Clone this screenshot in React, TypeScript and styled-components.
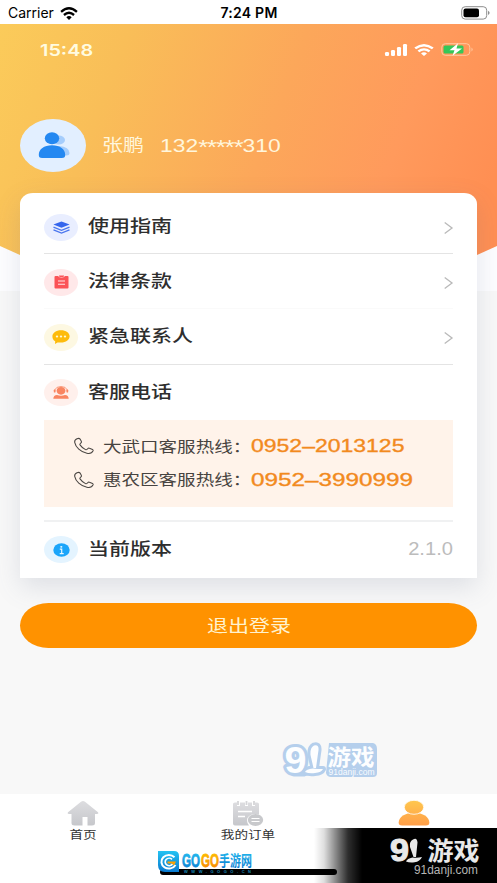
import React from 'react';
import styled, { createGlobalStyle } from 'styled-components';

const GlobalStyle = createGlobalStyle`
  * { box-sizing: border-box; }
  html, body { margin: 0; padding: 0; }
  body {
    font-family: 'Liberation Sans', 'Noto Sans CJK SC', sans-serif;
    background: #f7f7f7;
    overflow: hidden;
  }
  svg { display: block; flex: none; overflow: visible; }
`;

const Screen = styled.div`
  position: relative;
  width: 497px;
  height: 883px;
  display: flex;
  flex-direction: column;
  overflow: hidden;
  background: #f8f8f8;
`;

const StatusBar = styled.header`
  height: 24px;
  flex: none;
  display: grid;
  grid-template-columns: 1fr auto 1fr;
  align-items: center;
  padding: 2px 7px 0 8px;
  background: #fff;
  color: #000;
  font: 400 14px/20px Inter, sans-serif;
`;

const Carrier = styled.div`
  display: flex;
  align-items: center;
  gap: 6px;
`;

const Clock = styled.div`
  font-weight: 600;
  font-size: 14px;
  letter-spacing: 0.25px;
`;

const BatterySlot = styled.div`
  justify-self: end;
`;

const Hero = styled.section`
  height: 266px;
  flex: none;
  display: flex;
  flex-direction: column;
  background: linear-gradient(111deg, #fbcb5a 0%, #f9be58 22%, #fca75a 52%, #ff9a5c 74%, #ff8f53 92%);
  clip-path: polygon(0 0, 100% 0, 100% 222px, 477px 231px, 430px 250px, 67px 250px, 20px 231px, 0 222px);
`;

const InnerStatus = styled.div`
  height: 51px;
  display: flex;
  align-items: center;
  justify-content: space-between;
  padding: 0 23px 0 40px;
`;

const InnerIcons = styled.div`
  display: flex;
  align-items: center;
  gap: 7px;
`;

const Stretch = styled.span<{ $x?: number; $origin?: string }>`
  display: inline-block;
  white-space: nowrap;
  transform: scaleX(${p => p.$x ?? 1.235});
  transform-origin: ${p => p.$origin ?? 'left'} center;
`;

const InnerTime = styled(Stretch)`
  color: #fffbe0;
  font: 600 16px/20px Inter, sans-serif;
`;

const Profile = styled.div`
  display: flex;
  align-items: center;
  height: 53px;
  margin-top: 44px;
  padding-left: 20px;
`;

const Avatar = styled.div`
  width: 66px;
  height: 53px;
  border-radius: 50%;
  background: #e2efff;
  display: grid;
  place-items: center;
`;

const UserName = styled(Stretch)`
  width: 58px;
  margin-left: 16px;
  padding-top: 1px;
  color: #fff6dc;
  font-size: 17px;
  line-height: 24px;
`;

const UserPhone = styled(Stretch)`
  color: #fff6dc;
  font-size: 18px;
  line-height: 24px;
`;

const Mask = styled.span`
  display: inline-block;
  font-size: 20px;
  letter-spacing: -0.8px;
  transform: translateY(2px);
`;

const Content = styled.main`
  flex: 1;
  display: flex;
  flex-direction: column;
  margin-top: -97px;
  padding: 0 20px;
`;

const Card = styled.section`
  height: 385px;
  padding: 6px 24px 0;
  border-radius: 13px 13px 0 0 / 11px 11px 0 0;
  background: #fff;
  position: relative;
  box-shadow: 0 9px 26px rgba(95, 108, 135, 0.17);
`;

const Row = styled.div<{ $line?: string }>`
  height: 55.2px;
  display: flex;
  align-items: center;
  border-bottom: 1px solid ${p => p.$line ?? 'transparent'};
`;

const IconDisc = styled.div<{ $bg: string }>`
  width: 34px;
  height: 27px;
  margin-top: 2px;
  border-radius: 50%;
  background: ${p => p.$bg};
  display: grid;
  place-items: center;
`;

const Title = styled(Stretch)`
  margin-left: 10px;
  padding-top: 2px;
  color: #2e2e2e;
  font-size: 17px;
  font-weight: 500;
  line-height: 24px;
`;

const Trailing = styled.div`
  margin: 3px 0 0 auto;
  display: flex;
`;

const Version = styled(Stretch)`
  margin-top: -2px;
  color: #bcbcbc;
  font-size: 17.5px;
  line-height: 24px;
`;

const Hotlines = styled.div`
  height: 87px;
  padding: 9.5px 0 0 30px;
  background: #fff3ea;
`;

const Hotline = styled.div`
  height: 33.7px;
  display: flex;
  align-items: center;
`;

const HotlineLabel = styled(Stretch)`
  width: 148px;
  margin-left: 9px;
  padding-top: 1px;
  color: #474340;
  font-size: 15px;
  line-height: 24px;
`;

const HotlineNumber = styled(Stretch)`
  color: #f28a1e;
  font-size: 18.4px;
  line-height: 24px;
  -webkit-text-stroke: 0.35px #f28a1e;
`;

const Separator = styled.div`
  height: 2px;
  margin: 13px 0 0;
  background: #f0f1f2;
`;

const Logout = styled.button`
  height: 45.5px;
  flex: none;
  margin-top: 24.5px;
  padding: 3px 0 0;
  border: 0;
  border-radius: 29px / 23px;
  background: #ff9200;
  color: #fff3cf;
  font: 400 17px/24px 'Liberation Sans', 'Noto Sans CJK SC', sans-serif;
  position: relative;
`;

const TabBar = styled.nav`
  height: 89px;
  flex: none;
  display: grid;
  grid-template-columns: repeat(3, 1fr);
  background: #fff;
`;

const Tab = styled.div`
  display: flex;
  flex-direction: column;
  align-items: center;
  padding-top: 6px;
  color: #333;
  font-size: 11px;
  line-height: 14px;
`;

const TabLabel = styled(Stretch)`
  margin-top: 1px;
`;

const LowerBand = styled.div`
  position: absolute;
  left: 0;
  right: 0;
  top: 242px;
  height: 49px;
  background: #fdfdff;
  z-index: 0;
`;

const Layered = styled.div`
  position: relative;
  z-index: 1;
  flex: 1;
  display: flex;
  flex-direction: column;
`;

const Fade = styled.div`
  position: absolute;
  z-index: 2;
  right: 0;
  bottom: 0;
  width: 183px;
  height: 55px;
  background: linear-gradient(to right, rgba(0, 0, 0, 0) 0, rgba(0, 0, 0, 0.13) 10px, rgba(0, 0, 0, 0.5) 23px, rgba(0, 0, 0, 0.82) 34px, #000 48px);
`;

const HomeIndicator = styled.div`
  position: absolute;
  z-index: 3;
  left: 160px;
  top: 869px;
  width: 177px;
  height: 5.5px;
  border-radius: 3px;
  background: #000;
`;

const Mark = styled.div<{ $x: number; $y: number }>`
  position: absolute;
  z-index: 4;
  left: ${p => p.$x}px;
  top: ${p => p.$y}px;
`;

const WifiIcon = ({ color, w, h }: { color: string; w: number; h: number }) => (
  <svg width={w} height={h} viewBox="0 0 20 14" preserveAspectRatio="none" fill="none" stroke={color} strokeWidth="2.6">
    <path d="M1.2 5.2Q10-2.3 18.8 5.2" />
    <path d="M4.4 8.6Q10 3.8 15.6 8.6" />
    <path d="M7 11Q10 8.4 13 11L10 14Z" fill={color} stroke="none" />
  </svg>
);

const Chevron = () => (
  <svg width="9" height="12" viewBox="0 0 9 12" fill="none" stroke="#b9b9b9" strokeWidth="1.3">
    <path d="M.7.6 8 6 .7 11.4" />
  </svg>
);

const Handset = () => (
  <svg width="20" height="16" viewBox="0 0 20 16" fill="none" stroke="#4a4643" strokeWidth="1.05" strokeLinejoin="round">
    <path d="M3 .7C1.5 1.3.4 2.6.7 4.3c.8 4.7 6 9.6 12.2 10.9 2.7.6 5.2-.3 6.2-2.4.3-.7 0-1.1-.6-1.4l-3-1.2c-.7-.3-1.3-.1-1.7.4l-.9.9c-.4.4-.8.4-1.4.1C9.2 10.4 7.2 8.7 6 6.9c-.4-.6-.3-.9.2-1.3l.8-.7c.5-.4.6-.9.4-1.5L6.1 1.1C5.5.2 4.3.2 3 .7Z" />
  </svg>
);

const icons = {
  guide: (
    <svg width="17" height="13" viewBox="0 0 17 13">
      <path d="M8.5.4 16.6 3.5 8.5 6.7.4 3.5Z" fill="#3566ed" />
      <path d="M.5 6.2 8.5 9.3l8-3.1M.5 8.9l8 3.1 8-3.1" fill="none" stroke="#4a76ee" strokeWidth="1.3" />
    </svg>
  ),
  terms: (
    <svg width="15" height="14" viewBox="0 0 15 14">
      <path d="M1.5 1H4q1 1.5 3.5 1.5T11 1h2.500q1 0 1 1v10.500q0 1-1 1h-12q-1 0-1-1V2q0-1 1-1Z" fill="#fb5357" />
      <path d="M5 .4h5v1.100q-2.500 1.200-5 0Z" fill="#fb5357" />
      <path d="M4 6h7M4 9.200h7" stroke="#ffe5e5" strokeWidth="1.1" />
    </svg>
  ),
  contact: (
    <svg width="18" height="14" viewBox="0 0 18 14">
      <path d="M9 .3c4.9 0 8.6 2.6 8.6 6s-3.7 6.300-8.600 6.300H5.500L3 14l.2-2.700C1.400 10.200.4 8.400.4 6.400.4 2.900 4.100.3 9 .3Z" fill="#fdbb0b" />
      <g fill="#fff8d8"><ellipse cx="5" cy="6.5" rx="1.2" ry="1" /><ellipse cx="9" cy="6.5" rx="1.2" ry="1" /><ellipse cx="13" cy="6.5" rx="1.2" ry="1" /></g>
    </svg>
  ),
  service: (
    <svg width="16" height="13" viewBox="0 0 16 13" fill="#f98561">
      <ellipse cx="8" cy="4.8" rx="4.4" ry="3.9" />
      <path d="M1.700 6V4Q3 .5 8 .5T14.300 4v2" fill="none" stroke="#f98561" strokeWidth=".8" />
      <rect x=".8" y="3.6" width="1.7" height="3" rx=".7" />
      <rect x="13.5" y="3.6" width="1.7" height="3" rx=".7" />
      <path d="M.3 12.700Q.5 9.200 4 9q4 1.400 8 0 3.500.2 3.700 3.700Z" />
    </svg>
  ),
  version: (
    <svg width="17" height="14" viewBox="0 0 17 14">
      <ellipse cx="8.5" cy="7" rx="8.2" ry="6.7" fill="#1ba5fa" />
      <ellipse cx="8.3" cy="3.8" rx="1.1" ry=".9" fill="#e8f7ff" />
      <path d="M6.800 6.100h1.900v4.300M6.700 10.600h4" fill="none" stroke="#e8f7ff" strokeWidth="1.2" />
    </svg>
  ),
};

const PaleWordmark = () => (
  <svg width="96" height="46" viewBox="0 0 96 46">
    <g fill="#e9e9e9">
      <text x="3" y="27" fontFamily="Liberation Sans" fontWeight="700" fontSize="31" textLength="19" lengthAdjust="spacingAndGlyphs" stroke="#e9e9e9" strokeWidth="1">9</text>
      <path d="M26 5.500q4-2.500 4.500 3L29 23h-2.500L23 13q-1-5.500 3-7.500ZM19 27.500q1-3 6.500-4 5 .7 9.500-.5-2 4.500-7.500 5.300-5 .7-8.500-.8Z" />
      <text x="40.500" y="25.500" fontFamily="Noto Sans CJK SC" fontWeight="700" fontSize="24.500" textLength="52" lengthAdjust="spacingAndGlyphs">游戏</text>
    </g>
    <text x="27" y="39.500" fontFamily="Liberation Sans" fontSize="12.3" fill="#b5b5b5" textLength="64" lengthAdjust="spacingAndGlyphs">91danji.com</text>
  </svg>
);

const BlueWordmark = () => (
  <svg width="96" height="36" viewBox="0 0 96 36">
    <path d="M47 1H91q4 1 4 6v24q0 4-4 4H49q-4 0-5-4Z" fill="#b5cfec" />
    <g fill="#fdfeff" stroke="#b5cfec" strokeWidth="6" strokeLinejoin="round" paintOrder="stroke">
      <path d="M12 31.500h10l8-3Z" />
      <text x="2.500" y="31" fontFamily="Liberation Sans" fontWeight="700" fontSize="37" textLength="22" lengthAdjust="spacingAndGlyphs">9</text>
      <path d="M32 3.500q5-1.500 4.500 4.500L34 26h-2.500L28.500 13q-.5-7.500 3.500-9.500ZM23 30q1-3 8-3.500 5 .6 10 .500-1.500 3.500-8 4-6 .7-10-1Z" />
    </g>
    <text x="45.500" y="22.500" fontFamily="Noto Sans CJK SC" fontWeight="700" fontSize="22" fill="#fdfeff" textLength="47" lengthAdjust="spacingAndGlyphs">游戏</text>
    <text x="46.500" y="32.500" fontFamily="Liberation Sans" fontSize="8.5" fill="#f8fbff" textLength="46" lengthAdjust="spacingAndGlyphs">91danji.com</text>
  </svg>
);

const GogoLogo = () => (
  <svg width="97" height="24" viewBox="0 0 97 24">
    <defs>
      <linearGradient id="sky" x2="0" y2="1"><stop stopColor="#25c3f2" /><stop offset="1" stopColor="#0879d0" /></linearGradient>
      <linearGradient id="sun" x2="0" y2="1"><stop stopColor="#ffc800" /><stop offset="1" stopColor="#f78000" /></linearGradient>
    </defs>
    <path d="M1 1h16q5 0 5 5v16H8q-7 0-7-7Z" fill="url(#sky)" />
    <path d="M17.500 7.200A7.500 6.800 0 1 0 18.500 15" fill="none" stroke="#fff" strokeWidth="2" />
    <path d="M15 9.300A4 3.700 0 1 0 15.500 14" fill="none" stroke="#fff" strokeWidth="1.7" />
    <path d="M10.500 11.500h8.500l-2 4-2-2h-4.500Z" fill="#ffa200" />
    <g fontFamily="Liberation Sans" fontWeight="700" fontSize="19">
      <text x="25" y="17" fill="url(#sky)" stroke="url(#sky)" strokeWidth=".8" textLength="18" lengthAdjust="spacingAndGlyphs">GO</text>
      <text x="44" y="17" fill="url(#sun)" stroke="url(#sun)" strokeWidth=".8" textLength="18" lengthAdjust="spacingAndGlyphs">GO</text>
    </g>
    <text x="62" y="15.500" fontFamily="Noto Sans CJK SC" fontWeight="700" fontSize="14.500" fill="url(#sky)" textLength="33" lengthAdjust="spacingAndGlyphs">手游网</text>
    <text x="27" y="22.500" fontFamily="Liberation Sans" fontWeight="700" fontSize="4" fill="#1989bd" textLength="67">WWW.GOGO.CN</text>
  </svg>
);

const menu = [
  { title: '使用指南', icon: icons.guide, bg: '#e9eeff', line: '#e4e4e4' },
  { title: '法律条款', icon: icons.terms, bg: '#ffe8e9', line: '#fafafa' },
  { title: '紧急联系人', icon: icons.contact, bg: '#fdf8e2', line: '#e4e4e4' },
];

const hotlines = [
  { label: '大武口客服热线：', number: '0952–2013125', x: 1.25 },
  { label: '惠农区客服热线：', number: '0952–3990999', x: 1.32 },
];

export default function App() {
  return (
    <Screen>
      <GlobalStyle />
      <LowerBand />
      <Layered>
        <StatusBar>
          <Carrier>
            Carrier
            <WifiIcon color="#000" w={18} h={13} />
          </Carrier>
          <Clock>7:24 PM</Clock>
          <BatterySlot>
            <svg width="29" height="14" viewBox="0 0 29 14">
              <rect x=".7" y=".7" width="25" height="12.4" rx="3.5" fill="none" stroke="#8d8d8d" />
              <rect x="2.5" y="2.5" width="15.5" height="8.8" rx="2" />
              <path d="M27.200 4.800q2.600 2.100 0 4.200Z" fill="#777" />
            </svg>
          </BatterySlot>
        </StatusBar>

        <Hero>
          <InnerStatus>
            <InnerTime $x={1.24}>15:48</InnerTime>
            <InnerIcons>
              <svg width="22" height="12" viewBox="0 0 22 12" fill="#fff">
                <rect y="8" width="4" height="4" rx="1.2" />
                <rect x="6" y="6" width="4" height="6" rx="1.2" />
                <rect x="12" y="3" width="4" height="9" rx="1.2" />
                <rect x="18" width="4" height="12" rx="1.2" />
              </svg>
              <WifiIcon color="#fff" w={20} h={12} />
              <svg width="33" height="13" viewBox="0 0 33 13">
                <rect x=".8" y=".7" width="28" height="11.6" rx="3.5" fill="none" stroke="#ffc9a0" />
                <rect x="2.5" y="2.5" width="20" height="8" rx="1.5" fill="#35c759" />
                <path d="M30.500 4.500q2.400 2 0 4Z" fill="#ffc9a0" />
                <path d="M17 .3 8.500 7.200h5L11.500 12.700 21 5.500h-5.500Z" fill="#fff" />
              </svg>
            </InnerIcons>
          </InnerStatus>
          <Profile>
            <Avatar>
              <svg width="34" height="27" viewBox="0 0 34 27">
                <g fill="#a5cdfc">
                  <ellipse cx="22.5" cy="8" rx="6.5" ry="4.5" />
                  <path d="M15 23.500V14h8q10.500 1 10.500 7 0 2.500-3 2.500Z" />
                </g>
                <ellipse cx="16" cy="6.3" rx="7.2" ry="6" fill="#2488f1" />
                <path d="M16 13.300c8 0 13.200 4 13.200 9.500 0 2.400-.7 3.200-3.400 3.200H6.200c-2.700 0-3.400-.8-3.400-3.200 0-5.500 5.200-9.500 13.200-9.500Z" fill="#2488f1" />
              </svg>
            </Avatar>
            <UserName>张鹏</UserName>
            <UserPhone $x={1.27}>132<Mask>*****</Mask>310</UserPhone>
          </Profile>
        </Hero>

        <Content>
          <Card>
            {menu.map(item => (
              <Row key={item.title} $line={item.line}>
                <IconDisc $bg={item.bg}>{item.icon}</IconDisc>
                <Title>{item.title}</Title>
                <Trailing><Chevron /></Trailing>
              </Row>
            ))}
            <Row>
              <IconDisc $bg="#fff0ec">{icons.service}</IconDisc>
              <Title>客服电话</Title>
            </Row>
            <Hotlines>
              {hotlines.map(line => (
                <Hotline key={line.number}>
                  <Handset />
                  <HotlineLabel>{line.label}</HotlineLabel>
                  <HotlineNumber $x={line.x}>{line.number}</HotlineNumber>
                </Hotline>
              ))}
            </Hotlines>
            <Separator />
            <Row>
              <IconDisc $bg="#e4f4ff">{icons.version}</IconDisc>
              <Title>当前版本</Title>
              <Trailing><Version $x={1.15} $origin="right">2.1.0</Version></Trailing>
            </Row>
          </Card>
          <Logout><Stretch $origin="center">退出登录</Stretch></Logout>
        </Content>

        <TabBar>
          <Tab>
            <svg width="32" height="27" viewBox="0 0 32 27">
              <defs><linearGradient id="grey" x2="0" y2="1"><stop stopColor="#dddde0" /><stop offset="1" stopColor="#c6c7cb" /></linearGradient></defs>
              <path d="M14 1.800q2-1.600 4 0L31 12.300q1 1.700-1 1.700h-2v9q0 2.500-3 2.500h-4.500V17h-5v8.500H7.500q-3 0-3-2.500v-9H2q-2 0-1-1.700Z" fill="url(#grey)" />
            </svg>
            <TabLabel $origin="center">首页</TabLabel>
          </Tab>
          <Tab>
            <svg width="32" height="27" viewBox="0 0 32 27">
              <path d="M1 4q0-1.500 2-1.500h2V6h3V2.500h5V6h3V2.500h4V6h3V2.500h2q2 0 2 1.500v10.500q-8-2-11.500 3.500-1.500 4 1.500 7.500H3q-2 0-2-2Z" fill="url(#grey)" />
              <path d="M6 1v4M14.500 1v4M22 1v4" stroke="#d5d5d8" strokeWidth="1.8" />
              <path d="M6 11.500h14M6 16.500h7" stroke="#fff" strokeWidth="1.5" />
              <ellipse cx="23.5" cy="20" rx="7.7" ry="6" fill="#c8c9cc" />
              <path d="M19.500 18.500h8M19.500 21.500h8" stroke="#fff" strokeWidth="1.2" />
            </svg>
            <TabLabel $origin="center">我的订单</TabLabel>
          </Tab>
          <Tab>
            <svg width="32" height="27" viewBox="0 0 32 27">
              <defs><linearGradient id="warm" gradientUnits="userSpaceOnUse" x1="0" y1="0" x2="0" y2="26"><stop stopColor="#ffc84e" /><stop offset="1" stopColor="#ff9d48" /></linearGradient></defs>
              <path d="M16 12.800c9 0 15.300 4.300 15.300 9.800 0 2.200-.8 2.900-3.400 2.900H4.100C1.500 25.500.7 24.800.7 22.600.7 17.100 7 12.800 16 12.800Z" fill="url(#warm)" />
              <ellipse cx="16" cy="7.300" rx="9.7" ry="7" fill="url(#warm)" stroke="#fff" strokeWidth=".8" />
            </svg>
          </Tab>
        </TabBar>
      </Layered>

      <Fade />
      <HomeIndicator />
      <Mark $x={282} $y={742}>
        <BlueWordmark />
      </Mark>
      <Mark $x={387} $y={834}>
        <PaleWordmark />
      </Mark>
      <Mark $x={157} $y={850}>
        <GogoLogo />
      </Mark>
    </Screen>
  );
}
